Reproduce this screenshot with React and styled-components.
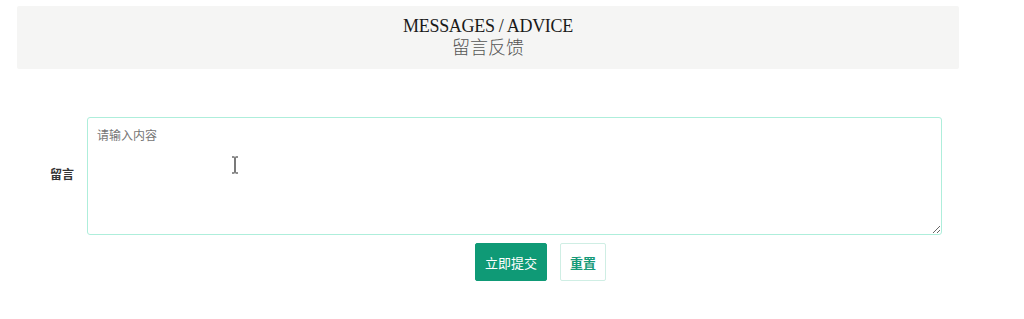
import React from 'react'
import styled, { createGlobalStyle } from 'styled-components'

const GlobalStyle = createGlobalStyle`
    body {
        margin: 0;
        background: #ffffff;
        font-family: "Liberation Sans", "Noto Sans CJK SC", sans-serif;
    }
`

const StyledPage = styled.div`
    width: 1024px;
    height: 319px;
    padding: 6px 0 0 17px;
    box-sizing: border-box;
    position: relative;
`

const StyledHeader = styled.div`
    width: 942px;
    height: 63px;
    background-color: #f5f5f4;
    border-radius: 2px;
    display: flex;
    flex-direction: column;
    align-items: center;
    padding-top: 10px;
    box-sizing: border-box;
`

const StyledTitle = styled.div`
    font-family: "Liberation Serif", "Noto Sans CJK SC", serif;
    font-size: 18px;
    line-height: 20px;
    color: #1a1a1a;
    letter-spacing: -0.3px;
`

const StyledSubTitle = styled.div`
    font-family: "Liberation Serif", "Noto Sans CJK SC", serif;
    font-size: 18px;
    line-height: 24px;
    color: #555555;
    font-weight: 300;
`

const StyledForm = styled.form`
    margin-top: 48px;
    display: flex;
    flex-direction: column;
    gap: 8px;
`

const StyledRow = styled.div`
    display: flex;
    flex-direction: row;
    align-items: center;
`

const StyledLabel = styled.label`
    width: 70px;
    box-sizing: border-box;
    padding: 0 13px 5px 0;
    text-align: right;
    font-size: 12px;
    font-weight: bold;
    color: #333333;
`

const StyledTextArea = styled.textarea`
    width: 855px;
    height: 118px;
    box-sizing: border-box;
    border: 1px solid #aeeedb;
    border-radius: 3px;
    padding: 8px 9px;
    font-family: "Liberation Sans", "Noto Sans CJK SC", sans-serif;
    font-size: 12px;
    color: #333333;
    resize: vertical;
    ::placeholder {
        color: #666666;
    }
    :focus {
        outline: none;
    }
`

const StyledButtons = styled.div`
    display: flex;
    flex-direction: row;
    gap: 13px;
    padding-left: 458px;
`

const StyledButton = styled.button`
    height: 38px;
    padding: 0 9px;
    border-radius: 2px;
    border: 1px solid ${props => props.primary ? '#0f9a76' : '#cfeee4'};
    background-color: ${props => props.primary ? '#0f9a76' : '#ffffff'};
    color: ${props => props.primary ? '#ffffff' : '#169a78'};
    font-family: "Noto Sans CJK SC", sans-serif;
    font-size: 13px;
    font-weight: ${props => props.primary ? 'normal' : 'bold'};
`

const StyledCursor = styled.svg`
    position: absolute;
    left: 231px;
    top: 156px;
`

function App() {
    return (
        <StyledPage>
            <GlobalStyle />
            <StyledHeader>
                <StyledTitle>MESSAGES / ADVICE</StyledTitle>
                <StyledSubTitle>留言反馈</StyledSubTitle>
            </StyledHeader>

            <StyledForm onSubmit={e => e.preventDefault()}>
                <StyledRow>
                    <StyledLabel>留言</StyledLabel>
                    <StyledTextArea placeholder="请输入内容" />
                </StyledRow>
                <StyledButtons>
                    <StyledButton primary type="submit">立即提交</StyledButton>
                    <StyledButton type="reset">重置</StyledButton>
                </StyledButtons>
            </StyledForm>

            {/* mouse cursor in the screenshot */}
            <StyledCursor width="8" height="18" viewBox="0 0 8 18">
                <path d="M1 1h2.5M4.5 1H7M4 1.5v15M1 17h2.5M4.5 17H7" stroke="#222" strokeWidth="1.2" fill="none" />
            </StyledCursor>
        </StyledPage>
    )
}

export default App
